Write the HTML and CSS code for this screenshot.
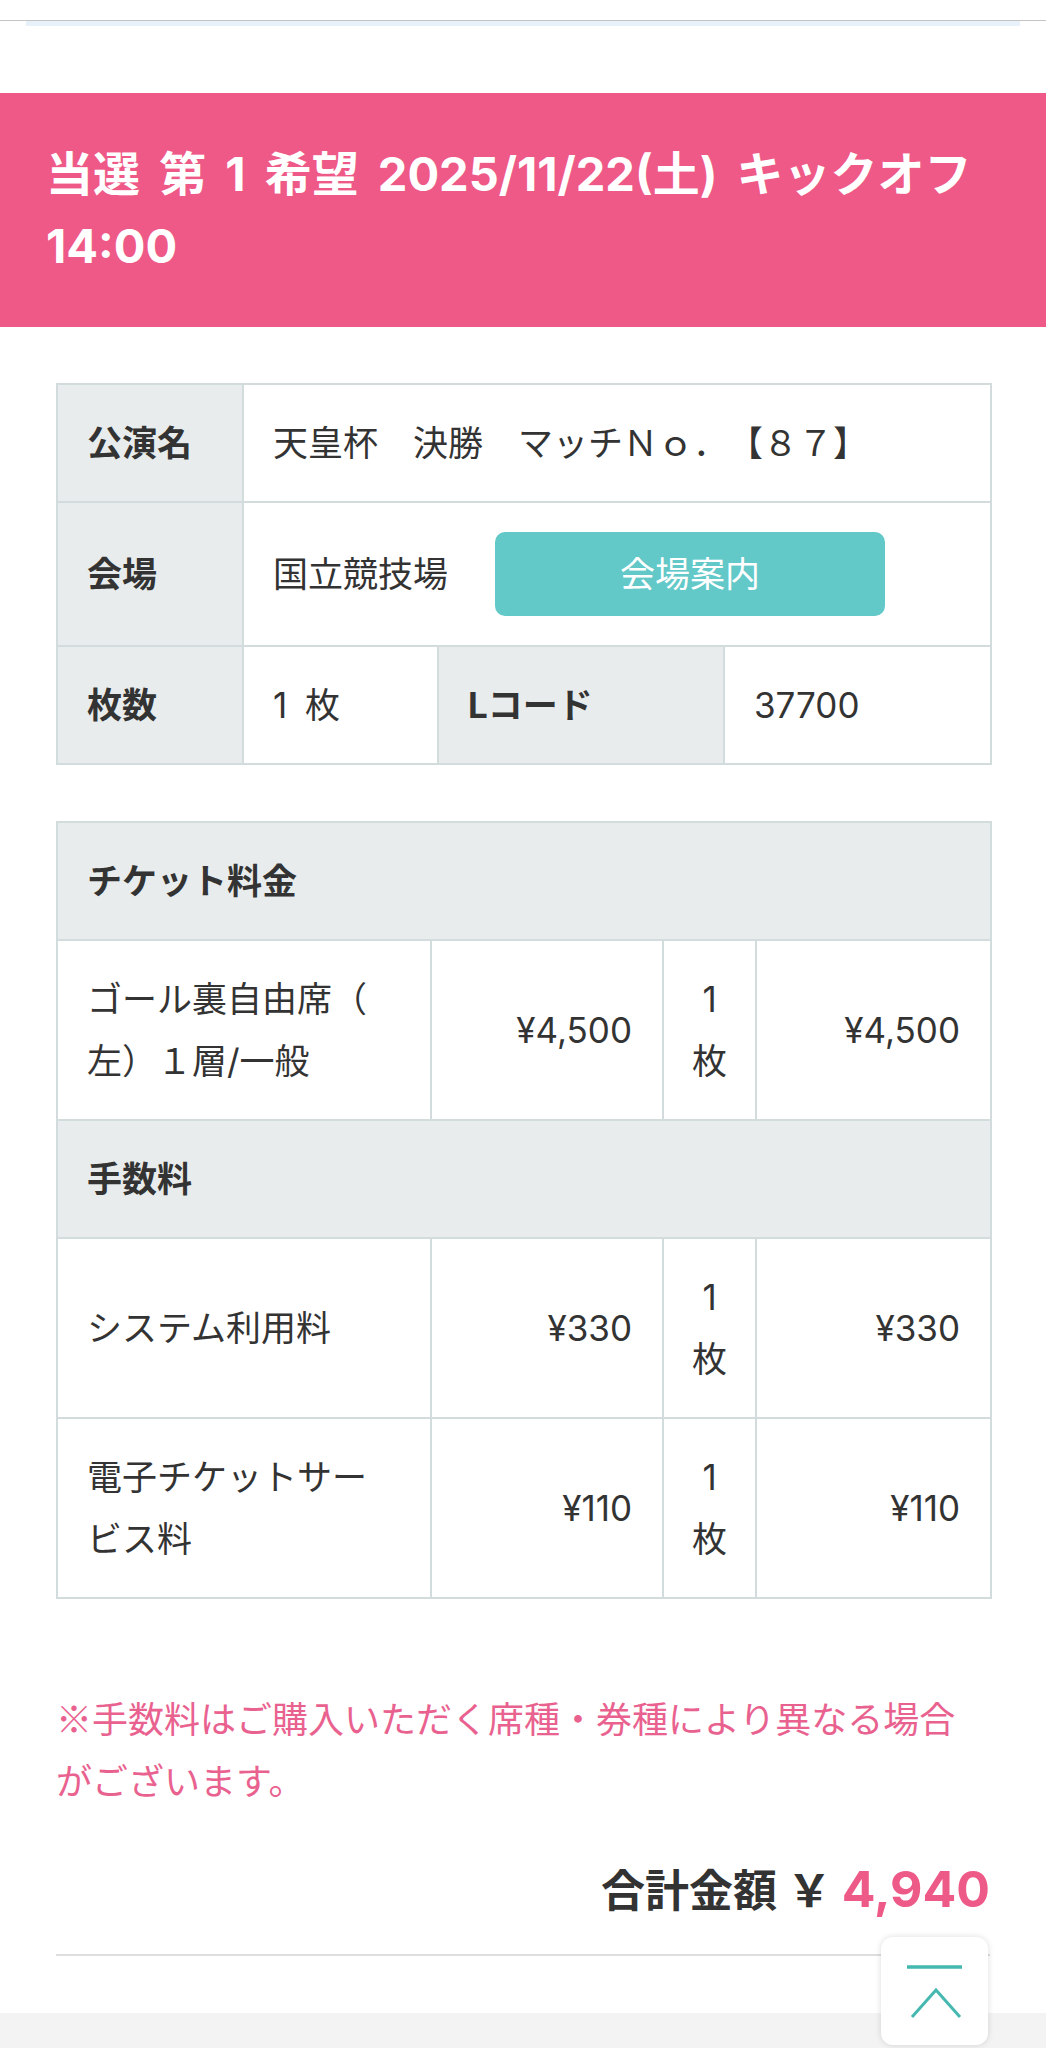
FILE: index.html
```html
<!DOCTYPE html>
<html lang="ja">
<head>
<meta charset="utf-8">
<title>当選内容</title>
<link rel="stylesheet" href="styles.css">
</head>
<body>
<div class="topbar"></div>
<div class="topstrip"></div>

<h1 class="result-head">当選 第 1 希望 2025/11/22(土) キックオフ 14:00</h1>

<main class="content">
  <table class="info">
    <colgroup>
      <col class="c1"><col class="c2"><col class="c3"><col class="c4">
    </colgroup>
    <tr>
      <th>公演名</th>
      <td colspan="3">天皇杯　決勝　マッチＮｏ．【８７】</td>
    </tr>
    <tr>
      <th>会場</th>
      <td colspan="3" class="venue-cell">
        <div class="venue">
          <span>国立競技場</span>
          <a class="map-btn">会場案内</a>
        </div>
      </td>
    </tr>
    <tr>
      <th>枚数</th>
      <td class="count">1 枚</td>
      <th>Lコード</th>
      <td>37700</td>
    </tr>
  </table>

  <table class="fee">
    <colgroup>
      <col class="f1"><col class="f2"><col class="f3"><col class="f4">
    </colgroup>
    <tr><th colspan="4">チケット料金</th></tr>
    <tr>
      <td class="name">ゴール裏自由席（左）１層/一般</td>
      <td class="price">¥4,500</td>
      <td class="qty">1 枚</td>
      <td class="price">¥4,500</td>
    </tr>
    <tr><th colspan="4">手数料</th></tr>
    <tr>
      <td class="name">システム利用料</td>
      <td class="price">¥330</td>
      <td class="qty">1 枚</td>
      <td class="price">¥330</td>
    </tr>
    <tr>
      <td class="name">電子チケットサービス料</td>
      <td class="price">¥110</td>
      <td class="qty">1 枚</td>
      <td class="price">¥110</td>
    </tr>
  </table>

  <p class="note">※手数料はご購入いただく席種・券種により異なる場合がございます。</p>

  <p class="total">合計金額 ￥ <span class="total-num">4,940</span></p>

  <hr class="sep">
</main>

<footer class="footer"></footer>

<a class="pagetop" aria-label="ページトップへ">
  <svg width="107" height="108" viewBox="0 0 107 108">
    <line x1="26" y1="30" x2="81" y2="30" stroke="#45b9b0" stroke-width="3.5"/>
    <polyline points="31,80 55,53 79,80" fill="none" stroke="#45b9b0" stroke-width="3"/>
  </svg>
</a>
</body>
</html>
```

FILE: styles.css
```css
html, body {
  margin: 0;
  padding: 0;
  background: #fff;
}
body {
  font-family: Inter, "Noto Sans CJK JP", "Noto Sans", sans-serif;
  color: #333;
  text-spacing-trim: space-all;
}
.topbar {
  height: 20px;
  border-bottom: 1px solid #c4c4c4;
}
.topstrip {
  height: 5px;
  margin: 0 26px;
  background: #e8f0f9;
}
.result-head {
  margin: 67px 0 0;
  padding: 45px 46px;
  background: #ee5987;
  color: #fff;
  font-size: 47px;
  line-height: 72px;
  font-weight: 700;
  word-spacing: 8px;
}
.content {
  padding: 56px 56px 0;
}
table {
  width: 100%;
  border-collapse: collapse;
  table-layout: fixed;
}
th, td {
  border: 2px solid #d3dcdc;
  padding: 27px 29px;
  font-size: 35px;
  line-height: 62px;
  text-align: left;
  vertical-align: middle;
}
th {
  background: #e8ecec;
  font-weight: 700;
}
td {
  background: #fff;
  font-weight: 400;
}
.c1 { width: 186px; }
.c2 { width: 195px; }
.c3 { width: 286px; }
.c4 { width: 267px; }
.count {
  word-spacing: 8px;
}
.venue-cell {
  padding-top: 29px;
  padding-bottom: 29px;
}
.venue {
  display: flex;
  align-items: center;
  gap: 47px;
}
.map-btn {
  display: flex;
  align-items: center;
  justify-content: center;
  width: 390px;
  height: 84px;
  background: #62c8c8;
  border-radius: 10px;
  color: #fff;
  font-size: 35px;
}
.fee {
  margin-top: 56px;
}
.f1 { width: 374px; }
.f2 { width: 232px; }
.f3 { width: 93px; }
.f4 { width: 235px; }
.name {
  line-break: anywhere;
  padding-right: 32px;
}
.price {
  text-align: right;
  padding-right: 30px;
}
.qty {
  text-align: center;
  padding-left: 26px;
  padding-right: 26px;
}
.note {
  margin: 87px 0 0;
  color: #e9628f;
  font-family: "Noto Sans CJK JP", sans-serif;
  font-size: 36px;
  line-height: 62px;
}
.total {
  margin: 48px 0 0;
  text-align: right;
  font-size: 44px;
  line-height: 62px;
  font-weight: 700;
  color: #333;
}
.total-num {
  color: #ee5a88;
  font-size: 50px;
}
.sep {
  margin: 32px 0 0;
  border: 0;
  height: 2px;
  background: #dedede;
}
.footer {
  margin-top: 57px;
  height: 200px;
  background: #f3f3f3;
}
.pagetop {
  position: fixed;
  right: 58px;
  top: 1937px;
  width: 107px;
  height: 108px;
  background: #fff;
  border-radius: 12px;
  box-shadow: 0 0 6px rgba(0, 0, 0, 0.14);
  display: block;
}
.pagetop svg {
  display: block;
}
```
